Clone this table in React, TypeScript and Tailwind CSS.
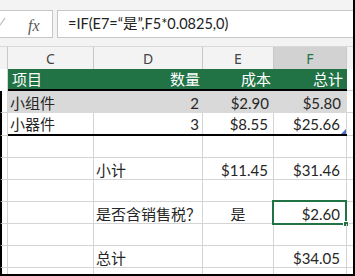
import React from "react";

const F = "[font-family:Lato,'Noto_Sans_CJK_SC',sans-serif]";

function Strip({ black = true, border = true }: { black?: boolean; border?: boolean }) {
  return (
    <div
      className={`w-[8px] shrink-0 bg-white border-r border-[#d4d4d4] ${black ? "border-l-2 border-l-black" : ""} ${border ? "border-b" : ""}`}
    />
  );
}

function Plain({
  left,
  d,
  dAlign = "left",
  e,
  eAlign = "right",
  f,
  selected = false,
}: {
  left?: string;
  d?: string;
  dAlign?: "left" | "right";
  e?: string;
  eAlign?: "right" | "center";
  f?: string;
  selected?: boolean;
}) {
  return (
    <div className="flex h-[22px]">
      <Strip />
      <div className="w-[86px] shrink-0 border-r border-b border-[#d4d4d4] flex items-center pl-[3px] pt-[3px]">{left}</div>
      <div
        className={`w-[109px] shrink-0 border-r border-b border-[#d4d4d4] flex items-center pt-[3px] ${dAlign === "left" ? "justify-start pl-[2px]" : "justify-end pr-[3px]"}`}
      >
        {d}
      </div>
      <div
        className={`w-[71px] shrink-0 border-r border-b border-[#d4d4d4] flex items-center pt-[3px] ${eAlign === "center" ? "justify-center" : "justify-end pr-[5px]"}`}
      >
        {e}
      </div>
      <div className="relative w-[73px] shrink-0 border-r border-b border-[#d4d4d4] flex items-center justify-end pr-[6px] pt-[3px]">
        {f}
        {selected && (
          <>
            <div className="absolute left-[-2px] top-[-2px] w-[75px] h-[25px] border-2 border-[#217346]" />
            <div className="absolute right-[-3px] bottom-[-4px] w-[6px] h-[6px] bg-[#217346] border border-white" />
          </>
        )}
      </div>
      <div className="w-[6px] shrink-0 border-b border-[#d4d4d4]" />
    </div>
  );
}

export default function App() {
  return (
    <div className={`w-[355px] h-[276px] overflow-hidden bg-white flex flex-col text-[15px] text-[#262626] ${F}`}>
      <div className="flex h-[274px]">
        <div className="w-[353px] flex flex-col">
          {/* Formula bar */}
          <div className="h-[47px] bg-[#f3f3f3] border-b border-[#d9d9d9] flex items-start pt-[10px] gap-[4px]">
            <div className="relative w-[53px] h-[28px] bg-white border border-l-0 border-[#c6c6c6] shrink-0">
              <svg className="absolute left-0 top-[6px]" width="8" height="10" viewBox="0 0 8 10">
                <polyline points="-3,5 0,8 5,1" fill="none" stroke="#c4c4c4" strokeWidth="1.3" />
              </svg>
              <span className="absolute left-[28px] top-[3px] [font-family:'Liberation_Serif',serif] italic text-[16px] text-[#5a5a5a]">
                fx
              </span>
            </div>
            <div className="flex-1 h-[28px] bg-white border border-r-0 border-[#c6c6c6] flex items-center pl-[10px] text-[14.5px] text-[#222]">
              =IF(E7=“是”,F5*0.0825,0)
            </div>
          </div>
          {/* Column headers */}
          <div className="flex h-[22px] bg-[#f3f3f3] text-[14px] text-[#444] [font-family:'Noto_Sans',sans-serif]">
            <div className="w-[8px] shrink-0 border-r border-[#c8c8c8]" />
            <div className="w-[86px] shrink-0 border-r border-[#c8c8c8] flex items-center justify-center">C</div>
            <div className="w-[109px] shrink-0 border-r border-[#c8c8c8] flex items-center justify-center">D</div>
            <div className="w-[71px] shrink-0 border-r border-[#c8c8c8] flex items-center justify-center">E</div>
            <div className="w-[73px] shrink-0 border-r border-[#c8c8c8] bg-[#d2d2d2] text-[#217346] flex items-center justify-center">
              F
            </div>
            <div className="w-[6px] shrink-0" />
          </div>
          {/* Green table header */}
          <div className="flex h-[22px] text-white">
            <div className="w-[8px] shrink-0 bg-white border-r border-[#d4d4d4]" />
            <div className="flex w-[339px] shrink-0 bg-[#217346] border-b-2 border-black">
              <div className="w-[86px] flex items-center pl-[4px] pt-[1px]">项目</div>
              <div className="w-[109px] flex items-center justify-end pr-[3px] pt-[1px]">数量</div>
              <div className="w-[71px] flex items-center justify-end pr-[3px] pt-[1px]">成本</div>
              <div className="w-[73px] flex items-center justify-end pr-[4px] pt-[1px]">总计</div>
            </div>
            <div className="w-[6px] shrink-0 border-b border-[#d4d4d4]" />
          </div>
          {/* Row: 小组件 */}
          <div className="flex h-[22px]">
            <Strip />
            <div className="flex w-[339px] shrink-0 bg-[#d9d9d9]">
              <div className="w-[86px] flex items-center pl-[2px] pt-[3px]">小组件</div>
              <div className="w-[109px] flex items-center justify-end pr-[4px] pt-[3px]">2</div>
              <div className="w-[71px] flex items-center justify-end pr-[5px] pt-[3px]">$2.90</div>
              <div className="w-[73px] flex items-center justify-end pr-[6px] pt-[3px]">$5.80</div>
            </div>
            <div className="w-[6px] shrink-0 border-b border-[#d4d4d4]" />
          </div>
          {/* Row: 小器件 */}
          <div className="flex h-[23px]">
            <Strip />
            <div className="flex w-[339px] shrink-0 border-b-2 border-black">
              <div className="w-[86px] border-r border-[#d4d4d4] flex items-center pl-[2px] pt-[2px]">小器件</div>
              <div className="w-[109px] border-r border-[#d4d4d4] flex items-center justify-end pr-[3px] pt-[2px]">3</div>
              <div className="w-[71px] border-r border-[#d4d4d4] flex items-center justify-end pr-[5px] pt-[2px]">$8.55</div>
              <div className="relative w-[73px] border-r border-[#d4d4d4] flex items-center justify-end pr-[6px] pt-[2px]">
                $25.66
                <svg className="absolute right-0 bottom-0" width="5" height="5" viewBox="0 0 5 5">
                  <polygon points="5,0 5,5 0,5" fill="#4a6fc4" />
                </svg>
              </div>
            </div>
            <div className="w-[6px] shrink-0 border-b border-[#d4d4d4]" />
          </div>
          <Plain />
          <Plain d="小计" e="$11.45" f="$31.46" />
          <Plain />
          <Plain d="是否含销售税？" e="是" eAlign="center" f="$2.60" selected />
          <Plain />
          <Plain d="总计" f="$34.05" />
          {/* partial row */}
          <div className="flex h-[6px]">
            <Strip border={false} />
            <div className="w-[86px] shrink-0 border-r border-[#d4d4d4]" />
            <div className="w-[109px] shrink-0 border-r border-[#d4d4d4]" />
            <div className="w-[71px] shrink-0 border-r border-[#d4d4d4]" />
            <div className="w-[73px] shrink-0 border-r border-[#d4d4d4]" />
            <div className="w-[6px] shrink-0" />
          </div>
        </div>
        <div className="w-[2px] bg-black" />
      </div>
      <div className="h-[2px] bg-black" />
    </div>
  );
}
